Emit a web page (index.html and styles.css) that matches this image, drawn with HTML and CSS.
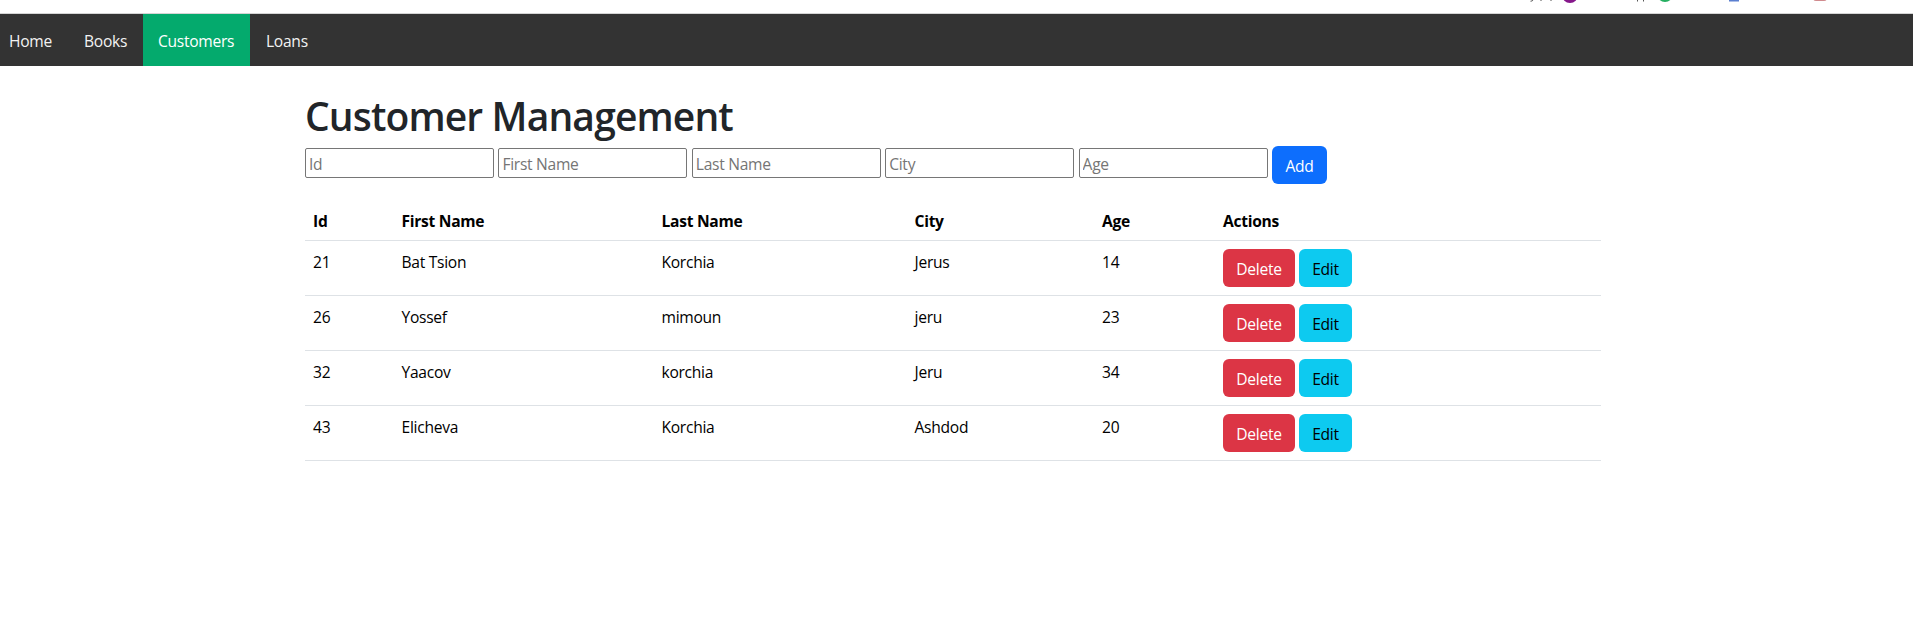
FILE: index.html
```html
<!DOCTYPE html>
<html lang="en">
<head>
<meta charset="utf-8">
<title>Customer Management</title>
<link rel="stylesheet" href="styles.css">
</head>
<body>
<div class="bookmarks">
<svg class="bookmark-icons" width="413" height="13" viewBox="0 0 413 13">
<path d="M33 0q-.3 1.200-2.500 1.200M41 0v1M51 0v1M137.500 0v1.500M143.500 0v1.500" fill="none" stroke="#555" stroke-width="1"/>
<circle cx="70" cy="-5" r="8" fill="#85178a"/>
<circle cx="165" cy="-6" r="8" fill="#25ae60"/>
<rect x="229" y="-8" width="10" height="9.500" fill="#5b7fd0"/>
<rect x="313" y="-8" width="14" height="9" rx="3" fill="#d08a8e"/>
</svg>
</div>
<nav class="navbar">
<a class="nav-link nav-home"><span>Home</span></a>
<a class="nav-link nav-books"><span>Books</span></a>
<a class="nav-link nav-customers active"><span>Customers</span></a>
<a class="nav-link nav-loans"><span>Loans</span></a>
</nav>
<main class="container">
<h1 class="title">Customer Management</h1>
<form class="add-form">
<input class="field" placeholder="Id">
<input class="field" placeholder="First Name">
<input class="field" placeholder="Last Name">
<input class="field" placeholder="City">
<input class="field" placeholder="Age">
<button type="button" class="btn btn-primary">Add</button>
</form>
<table class="table">
<colgroup><col class="col-id"><col class="col-first"><col class="col-last"><col class="col-city"><col class="col-age"><col></colgroup>
<thead><tr><th>Id</th><th>First Name</th><th>Last Name</th><th>City</th><th>Age</th><th>Actions</th></tr></thead>
<tbody>
<tr><td>21</td><td>Bat Tsion</td><td>Korchia</td><td>Jerus</td><td>14</td><td class="cell-actions"><div class="actions"><button class="btn btn-danger">Delete</button><button class="btn btn-info">Edit</button></div></td></tr>
<tr><td>26</td><td>Yossef</td><td>mimoun</td><td>jeru</td><td>23</td><td class="cell-actions"><div class="actions"><button class="btn btn-danger">Delete</button><button class="btn btn-info">Edit</button></div></td></tr>
<tr><td>32</td><td>Yaacov</td><td>korchia</td><td>Jeru</td><td>34</td><td class="cell-actions"><div class="actions"><button class="btn btn-danger">Delete</button><button class="btn btn-info">Edit</button></div></td></tr>
<tr><td>43</td><td>Elicheva</td><td>Korchia</td><td>Ashdod</td><td>20</td><td class="cell-actions"><div class="actions"><button class="btn btn-danger">Delete</button><button class="btn btn-info">Edit</button></div></td></tr>
</tbody>
</table>
</main>
</body>
</html>
```
FILE: styles.css
```css
* { box-sizing: border-box; }
body { margin: 0; background: #fff; color: #212529; font: 15.6px/24px "Open Sans", "Noto Sans", sans-serif; letter-spacing: -0.28px; }
.bookmarks { height: 14px; border-bottom: 1px solid #d5d5d5; display: flex; justify-content: flex-end; overflow: hidden; }
.bookmark-icons { display: block; }
.navbar { display: flex; height: 52px; background: #333; }
.nav-link { padding: 15px 0 13px 16px; color: #f2f2f2; }
.nav-home { width: 68px; padding-left: 9px; }
.nav-books { width: 75px; }
.nav-customers { width: 107px; padding-left: 15px; }
.nav-link.active { background: #04aa6d; color: #fff; }
.container { width: 1296px; margin: 26px 0 0 305px; }
.title { margin: 0 0 6px; font-size: 39px; line-height: 48px; font-weight: 600; letter-spacing: -0.86px; white-space: nowrap; }
.add-form { display: flex; align-items: flex-start; gap: 4.4px; height: 54px; }
.field { width: 189px; height: 30px; margin-top: 2px; padding: 2px 2px 0 3px; border: 1px solid #767676; border-radius: 2px; font: inherit; letter-spacing: inherit; }
.field::placeholder { color: #757575; }
.btn { height: 38px; padding: 2px 0 0; border: 0; border-radius: 6px; font: inherit; letter-spacing: inherit; text-align: center; }
.btn-primary { width: 55px; background: #0d6efd; color: #fff; }
.btn-danger { width: 72px; background: #dc3545; color: #fff; }
.btn-info { width: 53px; background: #0dcaf0; color: #000; }
.table { width: 100%; table-layout: fixed; border-collapse: separate; border-spacing: 0; color: #000; }
.col-id { width: 88.500px; }
.col-first { width: 260px; }
.col-last { width: 253px; }
.col-city { width: 187.500px; }
.col-age { width: 121px; }
th, td { padding: 9px 8px 7px; text-align: left; vertical-align: top; border-bottom: 1px solid #dee2e6; }
th { font-weight: 700; }
.cell-actions { padding: 8px; }
.actions { display: flex; gap: 4px; }
```
